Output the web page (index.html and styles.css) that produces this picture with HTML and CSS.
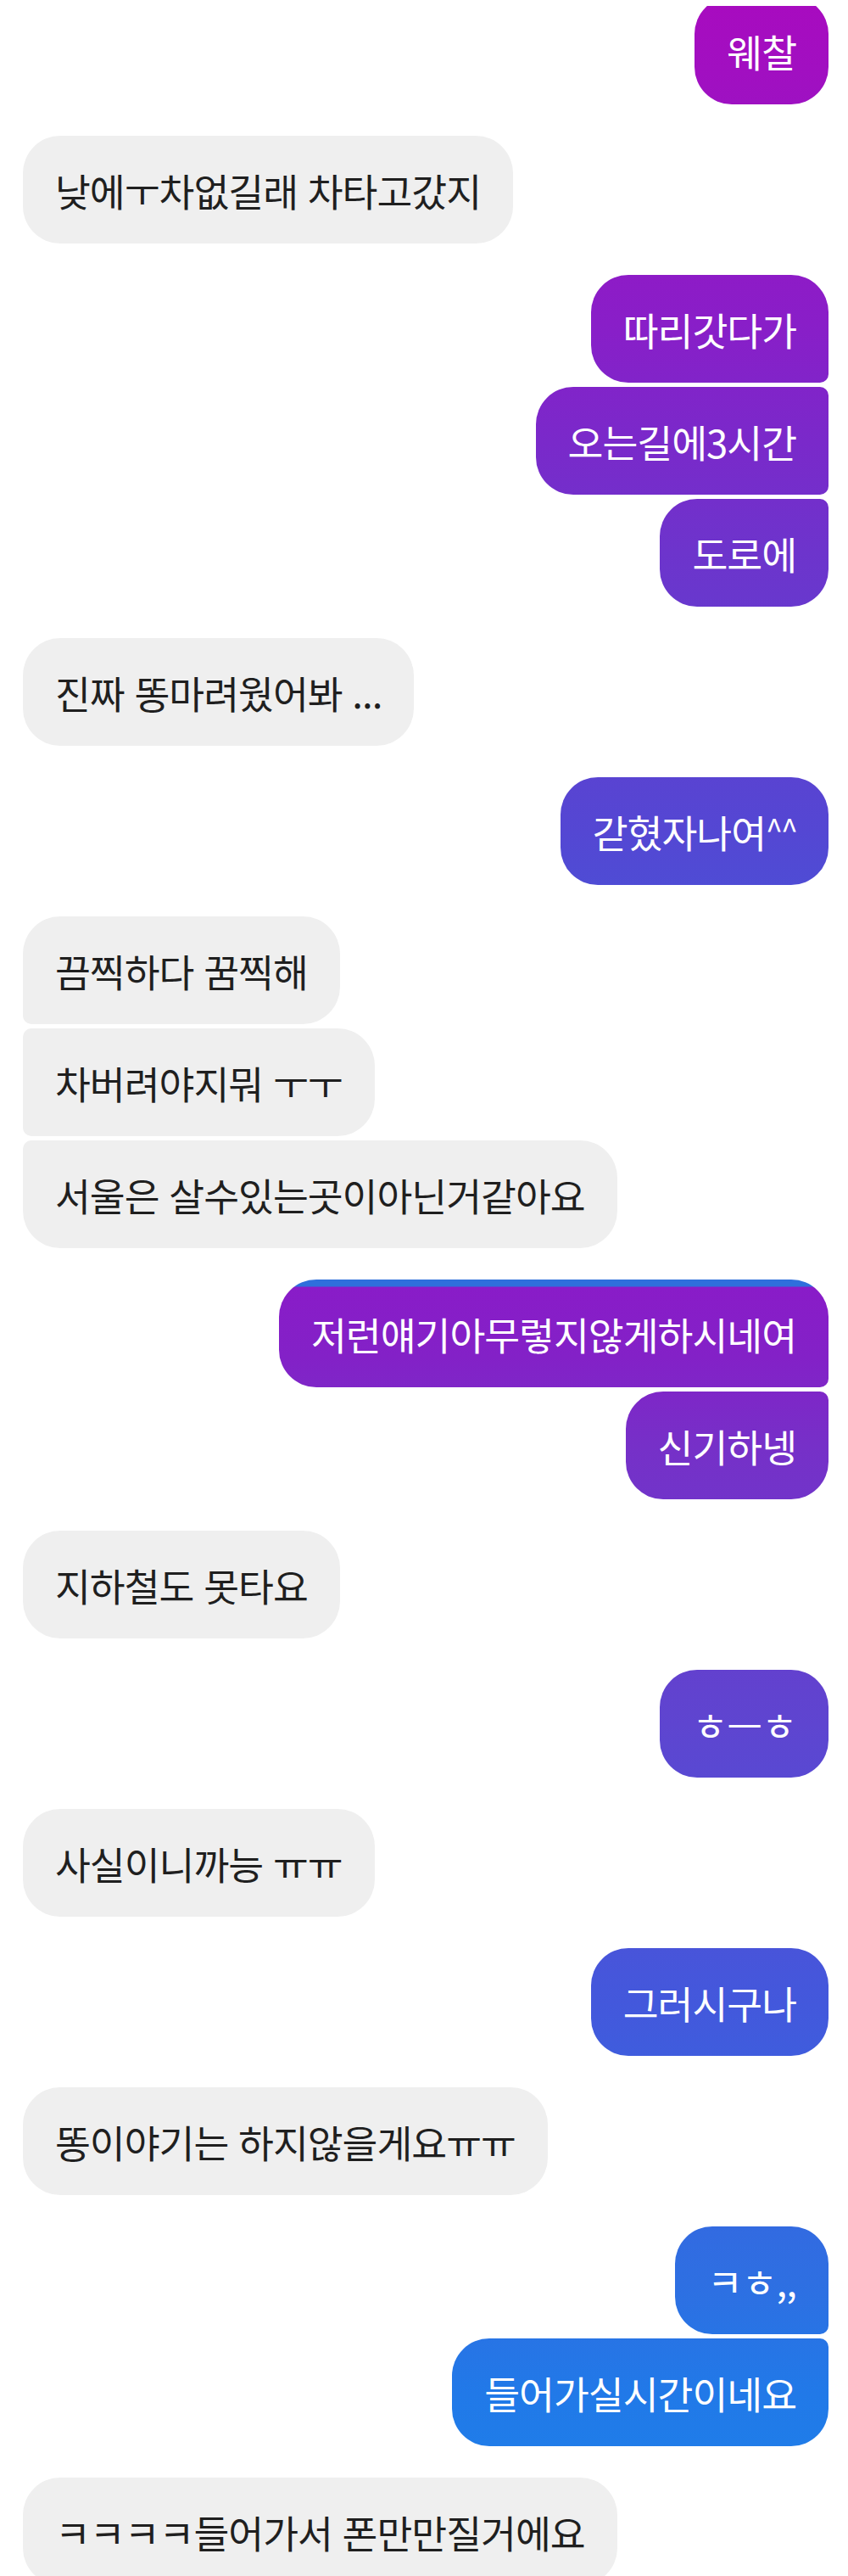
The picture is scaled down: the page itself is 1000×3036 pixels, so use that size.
FILE: index.html
```html
<!DOCTYPE html>
<html lang="ko">
<head>
  <meta charset="UTF-8">
  <title>대화</title>
  <link rel="stylesheet" href="styles.css">
</head>
<body>
  <div class="chat">

    <div class="group sent">
      <div class="msg cut">웨찰</div>
    </div>

    <div class="group recv">
      <div class="msg">낮에ㅜ차없길래 차타고갔지</div>
    </div>

    <div class="group sent">
      <div class="msg">따리갓다가</div>
      <div class="msg">오는길에3시간</div>
      <div class="msg">도로에</div>
    </div>

    <div class="group recv">
      <div class="msg">진짜 똥마려웠어봐 ...</div>
    </div>

    <div class="group sent">
      <div class="msg">갇혔자나여<span class="tight">^^</span></div>
    </div>

    <div class="group recv">
      <div class="msg">끔찍하다 꿈찍해</div>
      <div class="msg">차버려야지뭐 ㅜㅜ</div>
      <div class="msg">서울은 살수있는곳이아닌거같아요</div>
    </div>

    <div class="group sent">
      <div class="msg">저런얘기아무렇지않게하시네여</div>
      <div class="msg">신기하넹</div>
    </div>

    <div class="group recv">
      <div class="msg">지하철도 못타요</div>
    </div>

    <div class="group sent">
      <div class="msg">ㅎㅡㅎ</div>
    </div>

    <div class="group recv">
      <div class="msg">사실이니까능 ㅠㅠ</div>
    </div>

    <div class="group sent">
      <div class="msg">그러시구나</div>
    </div>

    <div class="group recv">
      <div class="msg">똥이야기는 하지않을게요ㅠㅠ</div>
    </div>

    <div class="group sent">
      <div class="msg">ㅋㅎ,,</div>
      <div class="msg">들어가실시간이네요</div>
    </div>

    <div class="group recv">
      <div class="msg">ㅋㅋㅋㅋ들어가서 폰만만질거에요</div>
    </div>

  </div>
</body>
</html>
```
FILE: styles.css
```css
body {
  margin: 0;
  padding: 7px 23px 0 27px;
  background: #fff;
  font-family: "Noto Sans CJK KR", "Noto Sans", sans-serif;
}

.chat {
  display: flex;
  flex-direction: column;
  gap: 37px;
  overflow: hidden;
  height: 3029px;
}

/* ===== message groups ===== */
.group {
  display: flex;
  flex-direction: column;
  gap: 5px;
}

.group.sent {
  align-items: flex-end;
}

.group.recv {
  align-items: flex-start;
}

/* ===== bubbles ===== */
.msg {
  box-sizing: border-box;
  height: 127px;
  padding: 0 38px;
  display: flex;
  align-items: center;
  font-size: 45.5px;
  letter-spacing: -1px;
  white-space: nowrap;
  border-radius: 44px;
}

.recv .msg {
  background: #efefef;
  color: #1f1f1f;
}

/* the gradient is pinned to the screen, bubbles only show a slice of it */
.sent .msg {
  color: #fff;
  background: linear-gradient(180deg,
    #a80bbf 0px,
    #891ec8 380px,
    #7a29ca 520px,
    #6d34cc 650px,
    #5447d3 980px,
    #4a50d6 1100px,
    #2f6fdc 1508px,
    #2f6fdc 1516px,
    #891cc8 1517px,
    #8321c7 1600px,
    #7630c8 1706px,
    #5e45d0 2032px,
    #4358dc 2360px,
    #2e6fe2 2690px,
    #2179e8 2820px,
    #1c84ea 3036px) fixed;
}

.sent .msg:not(:last-child) {
  border-bottom-right-radius: 10px;
}

.sent .msg:not(:first-child) {
  border-top-right-radius: 10px;
}

.recv .msg:not(:last-child) {
  border-bottom-left-radius: 10px;
}

.recv .msg:not(:first-child) {
  border-top-left-radius: 10px;
}

/* first bubble is cut off by the top of the screen */
.msg.cut {
  margin-top: -11px;
}

.tight {
  font-size: 36px;
  letter-spacing: -2px;
  align-self: flex-start;
  margin-top: 34px;
}
```
